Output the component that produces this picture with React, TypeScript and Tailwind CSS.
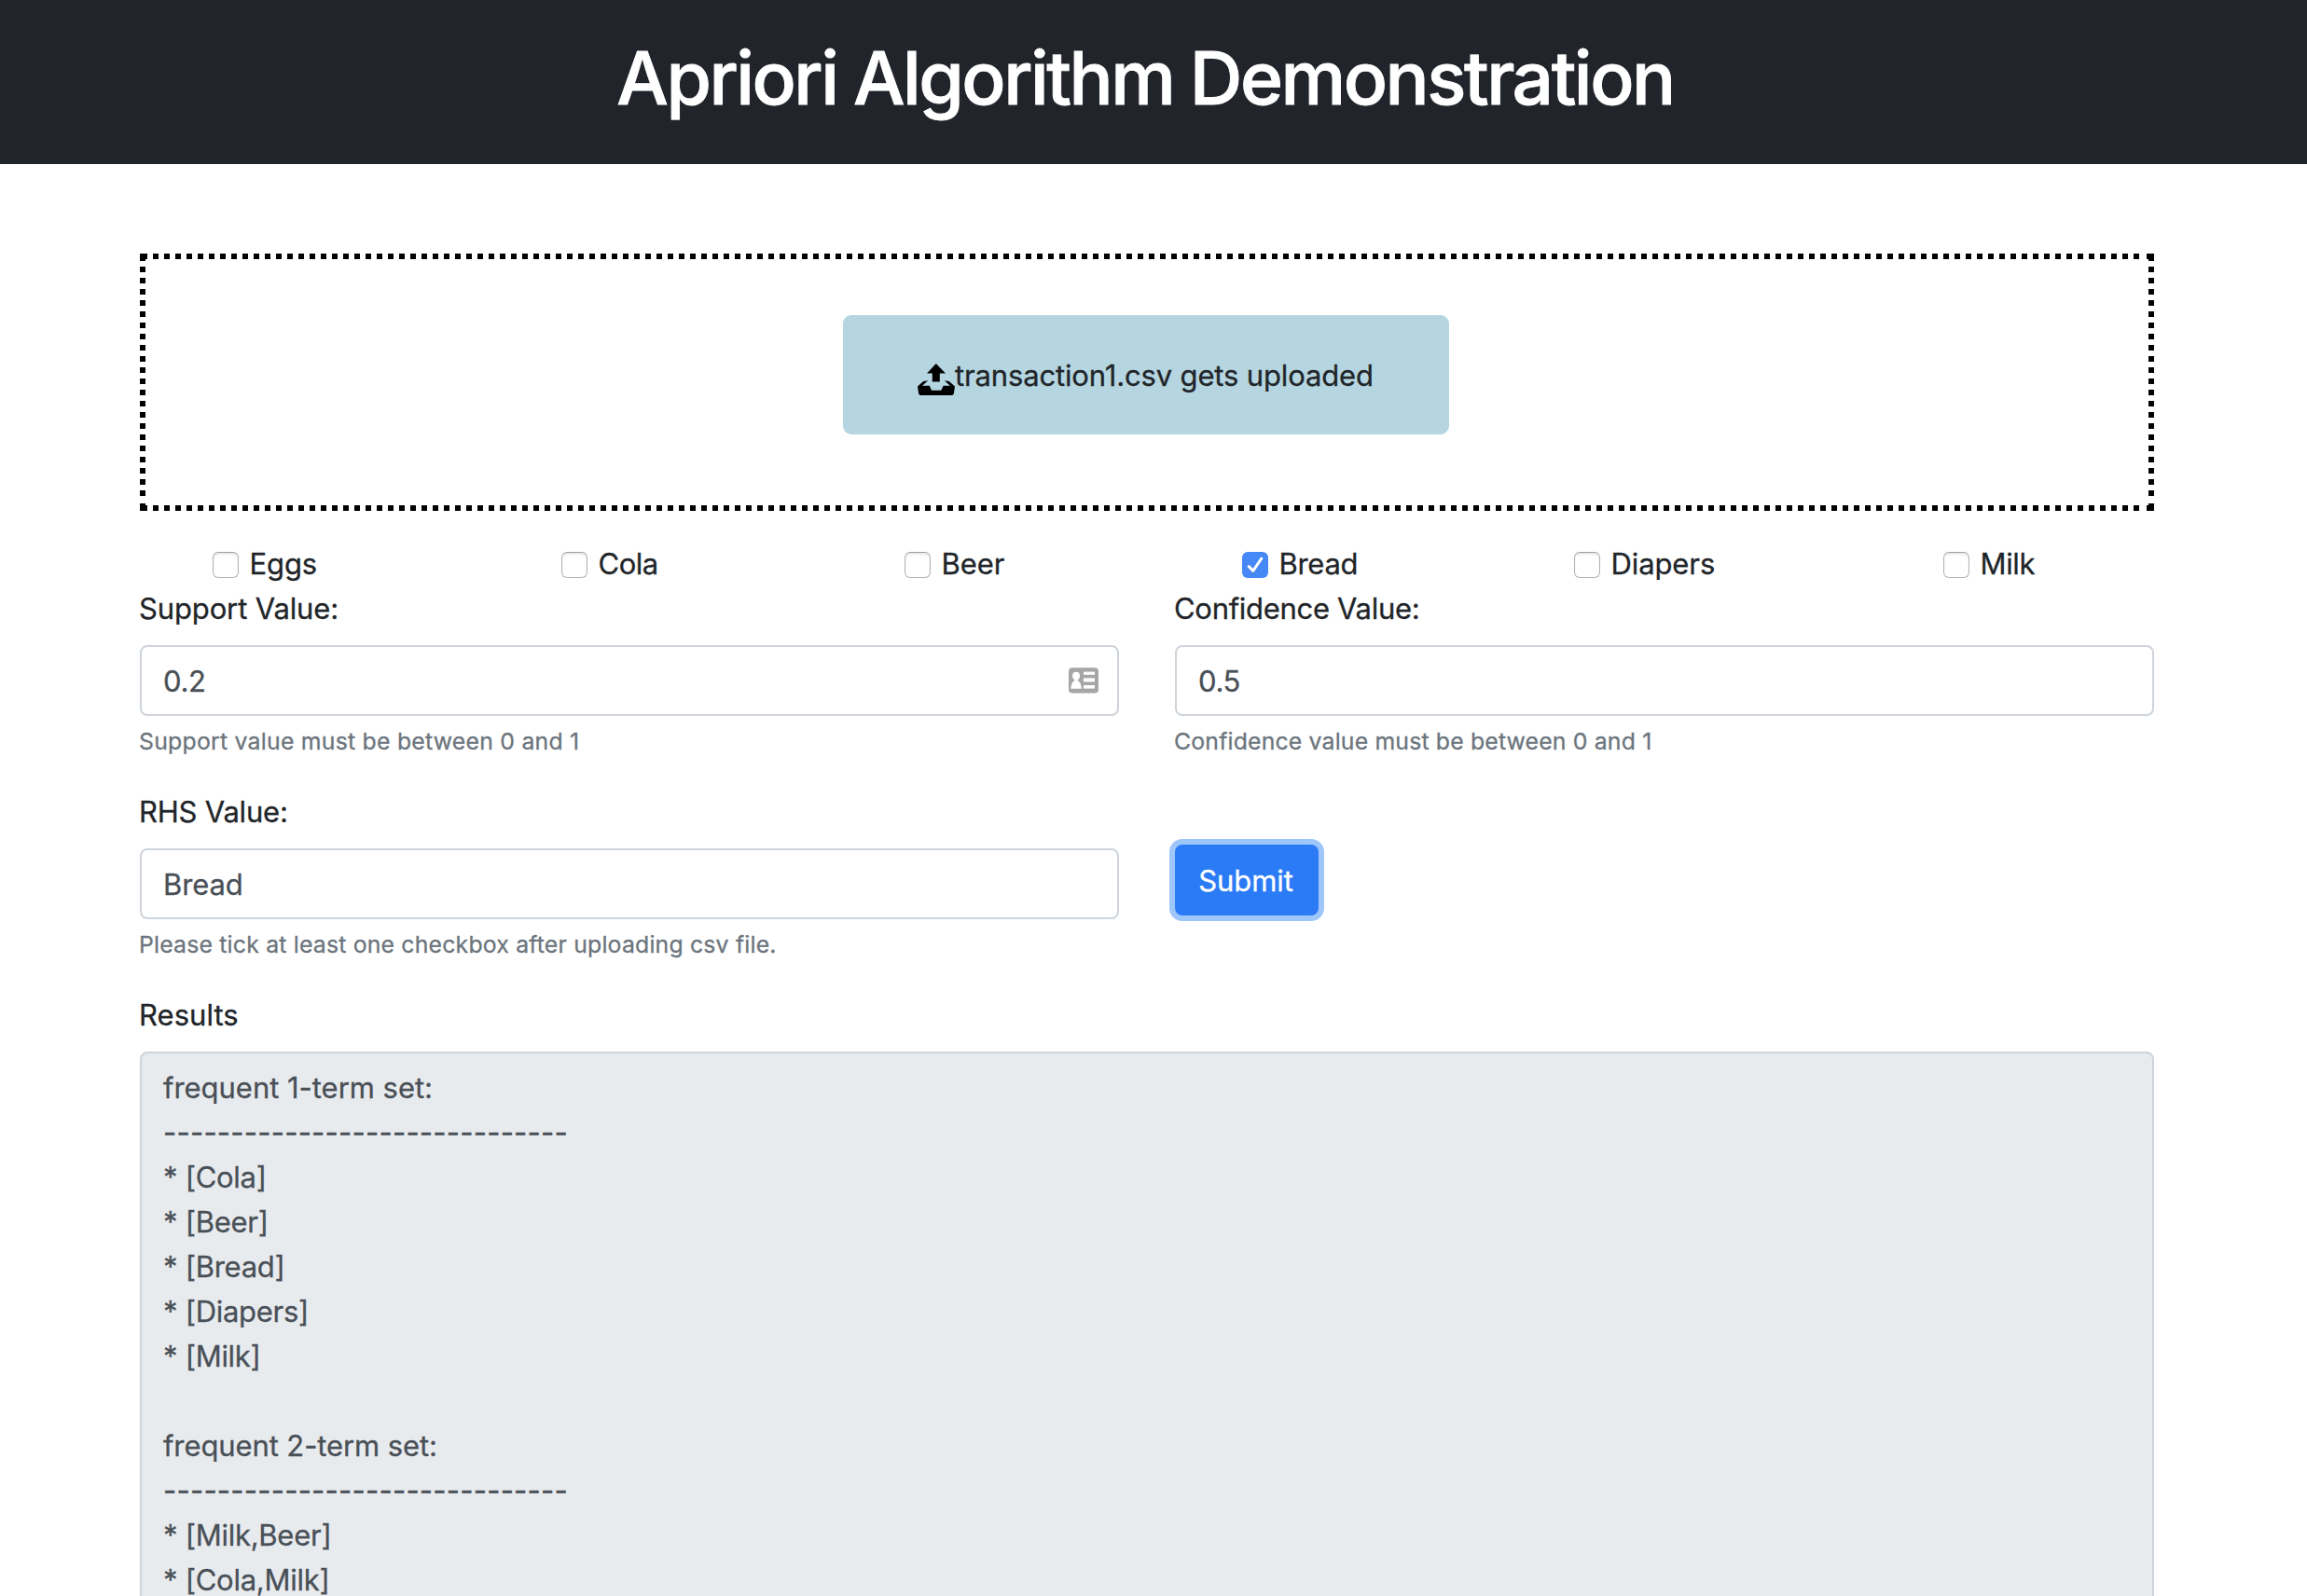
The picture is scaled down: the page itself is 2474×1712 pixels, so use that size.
import type { ReactNode } from 'react';

type Item = { name: string; slot: string; tracking: string; checked?: boolean };

const items: Item[] = [
  { name: 'Eggs', slot: 'w-[374px]', tracking: 'tracking-[-0.1px]' },
  { name: 'Cola', slot: 'w-[368px]', tracking: 'tracking-[-0.5px]' },
  { name: 'Beer', slot: 'w-[362px]', tracking: 'tracking-[-0.05px]' },
  { name: 'Bread', slot: 'w-[356px]', tracking: 'tracking-[-0.3px]', checked: true },
  { name: 'Diapers', slot: 'w-[396px]', tracking: 'tracking-[-0.1px]' },
  { name: 'Milk', slot: 'w-[120px]', tracking: 'tracking-[-0.35px]' },
];

const RULE = '-'.repeat(30);

const results: { text: string; tracking: string }[] = [
  { text: 'frequent 1-term set:', tracking: 'tracking-[-0.03px]' },
  { text: RULE, tracking: 'tracking-[0.207px]' },
  { text: '* [Cola]', tracking: 'tracking-[-0.29px]' },
  { text: '* [Beer]', tracking: 'tracking-[-0.29px]' },
  { text: '* [Bread]', tracking: 'tracking-[-0.29px]' },
  { text: '* [Diapers]', tracking: 'tracking-[-0.29px]' },
  { text: '* [Milk]', tracking: 'tracking-[-0.29px]' },
  { text: '', tracking: 'tracking-normal' },
  { text: 'frequent 2-term set:', tracking: 'tracking-[-0.1px]' },
  { text: RULE, tracking: 'tracking-[0.207px]' },
  { text: '* [Milk,Beer]', tracking: 'tracking-[-0.27px]' },
  { text: '* [Cola,Milk]', tracking: 'tracking-[-0.27px]' },
];

function UploadIcon() {
  return (
    <svg viewBox="0 0 40 34" className="mt-3 h-[34px] w-10 shrink-0" fill="#000">
      <path d="M19.8 0 L30 10.5 H23.8 V19.6 H15.8 V10.5 H10 Z" />
      <path d="M0 24.6 L6.2 19 L11.2 18.3 L5 23.8 H12.8 L15 28.7 H25.2 L27.6 23.8 H35 L28.8 18.3 L33.8 19 L40 24.6 L38.9 32 Q38.6 34 36.6 34 H3.4 Q1.4 34 1.1 32 Z" />
    </svg>
  );
}

function ContactCardIcon() {
  return (
    <svg viewBox="0 0 32 28" className="h-7 w-8" fill="#fff">
      <rect x="0" y="0.3" width="32" height="27.2" rx="4" fill="#a6a6a6" />
      <ellipse cx="8" cy="8.9" rx="4" ry="4.2" />
      <path d="M6.4 12 H9.6 V14 Q13.6 16 13.8 22.7 H2.4 Q2.6 16 6.4 14 Z" />
      <rect x="16" y="4.6" width="12" height="3.2" />
      <rect x="16" y="11.4" width="12" height="4" />
      <rect x="16" y="19" width="12" height="3.6" />
    </svg>
  );
}

function Checkbox({ checked }: { checked?: boolean }) {
  if (checked) {
    return (
      <span className="mt-3 size-7 shrink-0 rounded-[6px] bg-[#4688f6]">
        <svg viewBox="0 0 28 28" className="size-7" fill="none" strokeLinecap="round" strokeLinejoin="round">
          <path d="M7.2 16.4 L11.8 21.2 L20.8 8" stroke="#2f68cc" strokeOpacity="0.5" strokeWidth="3" />
          <path d="M7.2 15.6 L11.8 20.4 L20.8 7.2" stroke="#fff" strokeWidth="3" />
        </svg>
      </span>
    );
  }
  return (
    <span className="mt-3 size-7 shrink-0 rounded-[6px] border border-[#b4b4b4] border-t-[#a0a0a0] bg-white shadow-[inset_0_2px_2px_rgba(0,0,0,0.09)]" />
  );
}

/* Square dots along each edge, closed by an L-shaped mark in each corner. */
function DottedFrame() {
  return (
    <div className="pointer-events-none absolute inset-0">
      <i className="absolute top-0 right-4 left-[14px] h-[6px] bg-[repeating-linear-gradient(90deg,#000_0_6px,transparent_6px_12px)]" />
      <i className="absolute right-4 bottom-0 left-[14px] h-[6px] bg-[repeating-linear-gradient(90deg,#000_0_6px,transparent_6px_12px)]" />
      <i className="absolute top-[14px] bottom-4 left-0 w-[6px] bg-[repeating-linear-gradient(180deg,#000_0_6px,transparent_6px_12px)]" />
      <i className="absolute top-[14px] right-0 bottom-4 w-[6px] bg-[repeating-linear-gradient(180deg,#000_0_6px,transparent_6px_12px)]" />
      <i className="absolute top-0 left-0 size-2 border-t-[6px] border-l-[6px] border-black" />
      <i className="absolute top-0 right-0 size-2 border-t-[6px] border-r-[6px] border-black" />
      <i className="absolute bottom-0 left-0 size-2 border-b-[6px] border-l-[6px] border-black" />
      <i className="absolute right-0 bottom-0 size-2 border-r-[6px] border-b-[6px] border-black" />
    </div>
  );
}

function Field(props: {
  label: string;
  labelTracking: string;
  value: string;
  valueTracking: string;
  hint: string;
  hintTracking: string;
  icon?: ReactNode;
}) {
  return (
    <div className="w-[1050px]">
      <label className={`-ml-px block h-12 pt-px ${props.labelTracking}`}>{props.label}</label>
      <div className="mt-4 flex h-[76px] items-center rounded-lg border-2 border-[#ced4da] bg-white pr-5 pl-[23px]">
        <input
          type="text"
          defaultValue={props.value}
          className={`h-12 min-w-0 flex-1 bg-transparent pt-px leading-[47px] text-[#495057] outline-none ${props.valueTracking}`}
        />
        {props.icon}
      </div>
      <small className={`mt-2 -ml-px block text-[24.8px] leading-[38.4px] text-[#6c757d] ${props.hintTracking}`}>
        {props.hint}
      </small>
    </div>
  );
}

export default function App() {
  return (
    <div className="h-screen overflow-hidden bg-white font-['Inter',sans-serif] text-[31px] leading-[48px] text-[#212529] [-webkit-text-stroke-width:0.3px]">
      <header className="h-[176px] bg-[#21242b] pt-9">
        <h1 className="w-[2456px] text-center text-[78.4px] leading-[96px] font-medium tracking-[-2.48px] [word-spacing:-1px] text-white [-webkit-text-stroke-width:0.9px]">
          Apriori Algorithm Demonstration
        </h1>
      </header>

      <main className="ml-[150px] w-[2160px] pt-24">
        <section className="relative flex h-[276px] items-start pt-[66px] pl-[754px]">
          <DottedFrame />
          <button className="flex h-32 w-[650px] items-start rounded-[9px] bg-[#b5d6e1] pt-10 pl-20 tracking-[-0.15px]">
            <UploadIcon />
            <span className="pt-px whitespace-nowrap">transaction1.csv gets uploaded</span>
          </button>
        </section>

        <div className="mt-8 flex h-12 pl-[78px]">
          {items.map((item) => (
            <div key={item.name} className={`shrink-0 ${item.slot}`}>
              <label className="flex gap-[11.5px]">
                <Checkbox checked={item.checked} />
                <span className={`pt-px ${item.tracking}`}>{item.name}</span>
              </label>
            </div>
          ))}
        </div>

        <div className="flex justify-between">
          <Field
            label="Support Value:"
            labelTracking="tracking-[-0.13px]"
            value="0.2"
            valueTracking="tracking-[-0.35px]"
            hint="Support value must be between 0 and 1"
            hintTracking="tracking-[0.24px]"
            icon={<ContactCardIcon />}
          />
          <Field
            label="Confidence Value:"
            labelTracking="tracking-[-0.3px]"
            value="0.5"
            valueTracking="tracking-[-0.35px]"
            hint="Confidence value must be between 0 and 1"
            hintTracking="tracking-[0.17px]"
          />
        </div>

        <div className="mt-8 flex justify-between">
          <Field
            label="RHS Value:"
            labelTracking="tracking-[-0.2px]"
            value="Bread"
            valueTracking="tracking-[-0.1px]"
            hint="Please tick at least one checkbox after uploading csv file."
            hintTracking="tracking-[0.19px]"
          />
          <div className="w-[1050px] pt-[60px]">
            <button className="block h-[76px] w-[154px] rounded-lg bg-[#2b7bf6] pt-px pr-0.5 text-center tracking-[-0.05px] text-white shadow-[0_0_0_6px_#9fc6fb]">
              Submit
            </button>
          </div>
        </div>

        <section className="mt-[31.6px]">
          <h2 className="-ml-px h-12 pt-px tracking-[0.05px]">Results</h2>
          <div className="mt-[15.6px] h-[1200px] rounded-lg border-2 border-[#ced4da] bg-[#e8ebee] px-[23px] pt-[13px] text-[#495057]">
            {results.map((line, i) => (
              <p key={i} className={`h-12 whitespace-pre ${line.tracking}`}>
                {line.text}
              </p>
            ))}
          </div>
        </section>
      </main>
    </div>
  );
}
